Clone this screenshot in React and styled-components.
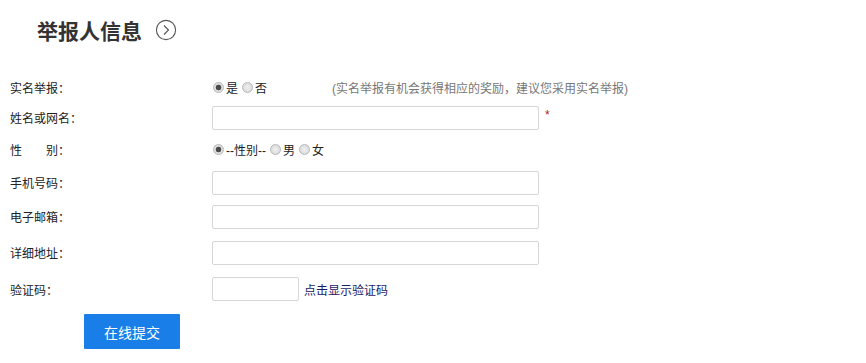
import styled, { createGlobalStyle } from "styled-components"

const GlobalStyle = createGlobalStyle`
body {
    margin: 0;
    background: #fff;
    font-family: "Liberation Sans", "Noto Sans CJK SC", sans-serif;
    color: #222;
}
`

const Page = styled.div`
width: 866px;
height: 363px;
overflow: hidden;
`

const Header = styled.div`
display: flex;
align-items: center;
height: 60px;
padding: 0 0 0 37px;
& h2 {
    margin: 0;
    font-size: 21px;
    font-weight: bold;
    color: #333;
    letter-spacing: 0;
}
& svg {
    margin-left: 13px;
}
`

const Form = styled.div`
padding-top: 12px;
`

const Row = styled.div`
display: flex;
align-items: center;
height: ${p => p.h}px;
font-size: 12px;
`

const Label = styled.div`
width: 202px;
padding-left: 10px;
white-space: pre;
`

const Field = styled.div`
display: flex;
align-items: center;
`

const TextInput = styled.input`
box-sizing: border-box;
width: ${p => p.w || 327}px;
height: 24px;
border: 1px solid #d6d6d6;
border-radius: 2px;
outline: none;
`

const Radio = styled.input.attrs({ type: "radio" })`
appearance: none;
width: 11px;
height: 11px;
margin: 0 2px 0 1px;
border-radius: 50%;
border: 1px solid #b8b8b8;
background: radial-gradient(circle, #f0f0f0 0, #d4d4d4 100%);
&:checked {
    background: radial-gradient(circle, #4a4a4a 0, #4a4a4a 2.5px, #e4e4e4 3.2px, #cfcfcf 100%);
}
`

const Choice = styled.label`
display: flex;
align-items: center;
margin-right: 3px;
`

const Hint = styled.span`
margin-left: 62px;
color: #777;
`

const Star = styled.span`
color: #b02020;
margin-left: 6px;
margin-top: -6px;
`

const CodeLink = styled.span`
margin-left: 5px;
color: #1a1a66;
`

const Submit = styled.button`
display: block;
margin: 7px 0 0 84px;
width: 96px;
height: 35px;
border: none;
border-radius: 1px;
background: #1a7ee9;
color: #fff;
font-size: 14px;
font-family: inherit;
`

export default function App() {
    return (
        <Page>
            <GlobalStyle />
            <Header>
                <h2>举报人信息</h2>
                <svg width="22" height="22" viewBox="0 0 22 22">
                    <circle cx="11" cy="11" r="9.6" fill="none" stroke="#555" strokeWidth="1.1" />
                    <path d="M9 6.5 L13.5 11 L9 15.5" fill="none" stroke="#555" strokeWidth="1.1" />
                </svg>
            </Header>
            <Form>
                <Row h={30}>
                    <Label>实名举报：</Label>
                    <Field>
                        <Choice><Radio name="real" defaultChecked />是</Choice>
                        <Choice><Radio name="real" />否</Choice>
                        <Hint>(实名举报有机会获得相应的奖励，建议您采用实名举报)</Hint>
                    </Field>
                </Row>
                <Row h={31}>
                    <Label>姓名或网名：</Label>
                    <Field><TextInput /><Star>*</Star></Field>
                </Row>
                <Row h={33}>
                    <Label>{"性\u3000\u3000别："}</Label>
                    <Field>
                        <Choice><Radio name="sex" defaultChecked />--性别--</Choice>
                        <Choice><Radio name="sex" />男</Choice>
                        <Choice><Radio name="sex" />女</Choice>
                    </Field>
                </Row>
                <Row h={33}>
                    <Label>手机号码：</Label>
                    <Field><TextInput /></Field>
                </Row>
                <Row h={35}>
                    <Label>电子邮箱：</Label>
                    <Field><TextInput /></Field>
                </Row>
                <Row h={37}>
                    <Label>详细地址：</Label>
                    <Field><TextInput /></Field>
                </Row>
                <Row h={36}>
                    <Label>验证码：</Label>
                    <Field><TextInput w={87} /><CodeLink>点击显示验证码</CodeLink></Field>
                </Row>
                <Submit>在线提交</Submit>
            </Form>
        </Page>
    )
}
